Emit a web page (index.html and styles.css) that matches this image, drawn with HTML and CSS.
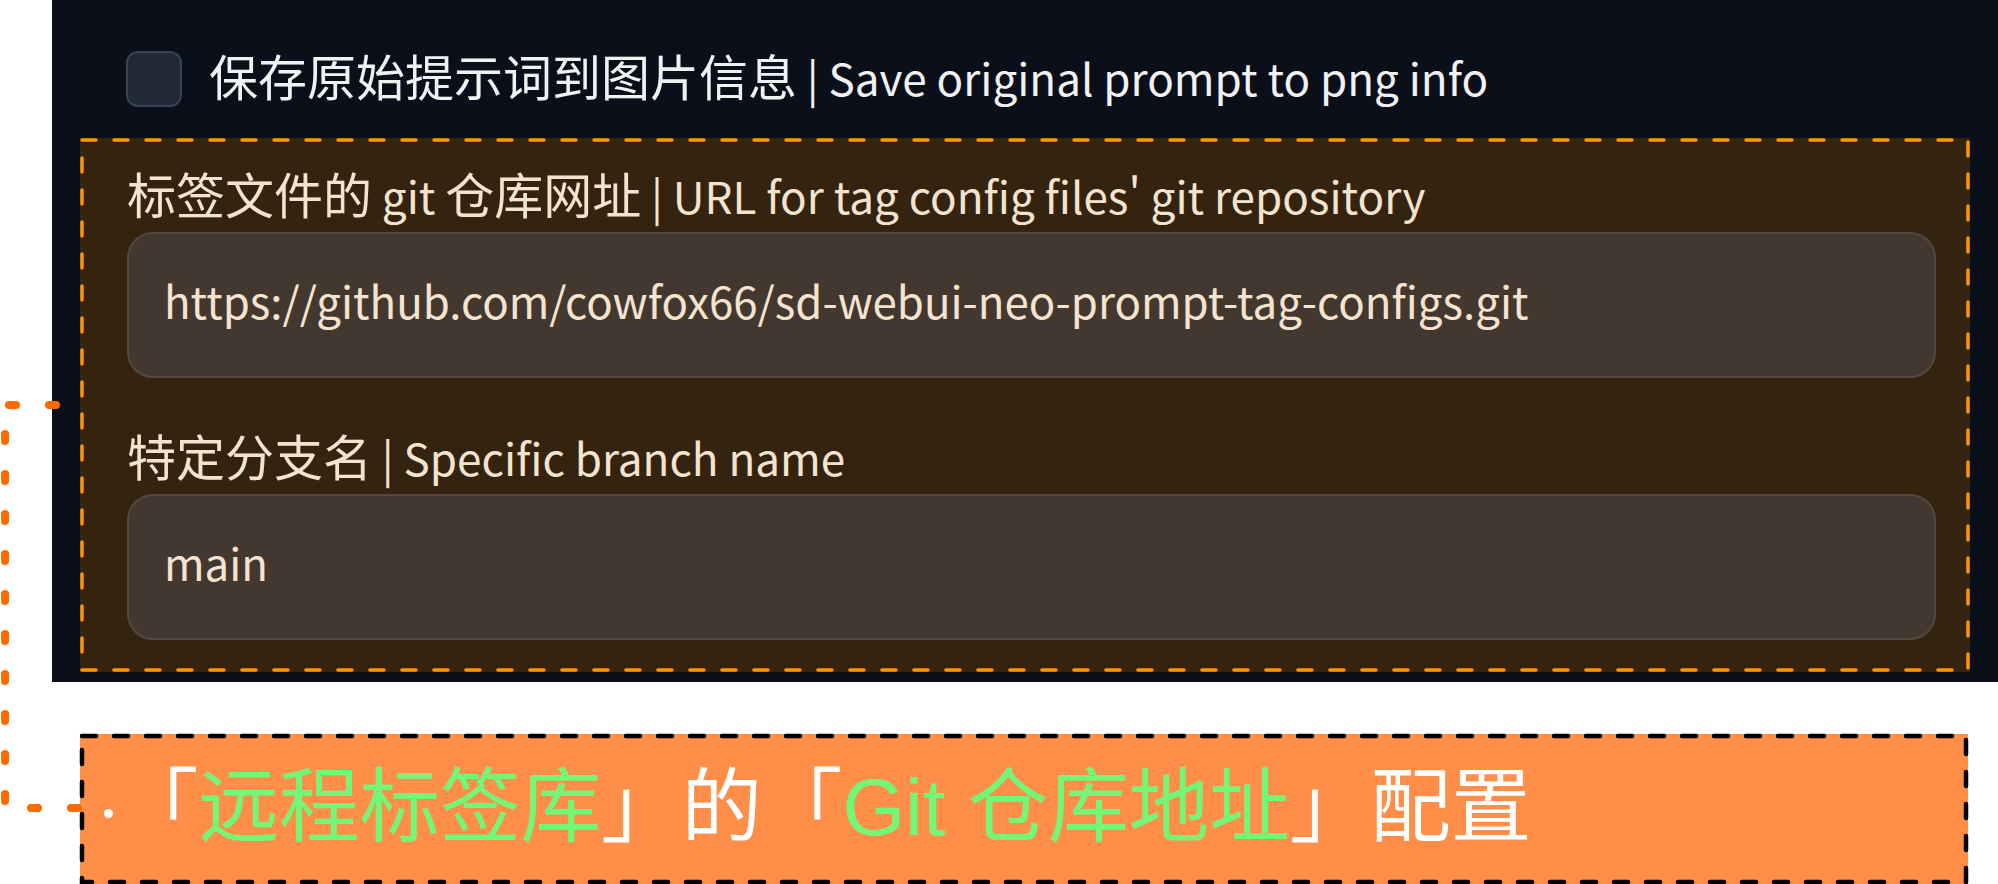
FILE: index.html
```html
<!DOCTYPE html>
<html lang="zh-CN">
<head>
<meta charset="utf-8">
<title>Neo Prompt Tag Settings</title>
<link rel="stylesheet" href="styles.css">
</head>
<body>
<div class="stage">
  <section class="panel">
    <label class="check-row">
      <input type="checkbox" class="checkbox">
      <span class="check-label">保存原始提示词到图片信息<span class="latin"> | Save original prompt to png info</span></span>
    </label>
    <div class="group">
      <svg class="dash-frame" aria-hidden="true"><rect class="dash-rect dash-orange"></rect></svg>
      <label class="field">
        <span class="field-label">标签文件的<span class="latin"> git </span>仓库网址<span class="latin"> | URL for tag config files' git repository</span></span>
        <input class="field-input" type="text" value="https://github.com/cowfox66/sd-webui-neo-prompt-tag-configs.git">
      </label>
      <label class="field field-second">
        <span class="field-label">特定分支名<span class="latin"> | Specific branch name</span></span>
        <input class="field-input" type="text" value="main">
      </label>
    </div>
  </section>
  <div class="callout">
    <svg class="dash-frame" aria-hidden="true"><rect class="dash-rect dash-black"></rect></svg>
    <span class="bullet"></span>
    <p class="callout-text">「<span class="hl">远程标签库</span>」的「<span class="hl">Git 仓库地址</span>」配置</p>
  </div>
  <svg class="connector" width="100" height="884" aria-hidden="true">
    <path d="M56 405 H5 V808 H84"></path>
  </svg>
</div>
</body>
</html>
```

FILE: styles.css
```css
* { box-sizing: border-box; }

html, body {
  margin: 0;
  padding: 0;
  background: #ffffff;
}

body {
  width: 1998px;
  height: 884px;
  overflow: hidden;
  font-family: "Noto Sans CJK SC", "Noto Sans", sans-serif;
}

.stage {
  position: relative;
  width: 1998px;
  height: 884px;
}

.panel {
  margin-left: 52px;
  width: 1946px;
  background: #0b0f19;
  padding: 51px 28px 10px 28px;
}

.check-row {
  display: flex;
  align-items: center;
  height: 56px;
  margin-left: 46px;
  gap: 27px;
}

.checkbox {
  appearance: none;
  -webkit-appearance: none;
  margin: 0;
  width: 56px;
  height: 56px;
  border: 2px solid #394253;
  border-radius: 12px;
  background: #1f2937;
  flex: none;
}

.check-label {
  font-size: 49px;
  line-height: 48px;
  padding-bottom: 8px;
  color: #f0f1f3;
  white-space: nowrap;
}

.latin {
  font-size: 44px;
  line-height: 1;
}

.group {
  position: relative;
  margin-top: 31px;
  background: #33230f;
  padding: 19px 34px 32px 47px;
}

.dash-frame {
  position: absolute;
  left: 0;
  top: 0;
  width: 100%;
  height: 100%;
  overflow: visible;
  pointer-events: none;
}

.dash-rect {
  x: 2px;
  y: 2px;
  width: calc(100% - 4px);
  height: calc(100% - 4px);
  fill: none;
  stroke-dasharray: 14 18;
  stroke-linecap: round;
}

.dash-orange {
  stroke: #ff9500;
  stroke-width: 3.5;
}

.dash-black {
  stroke: #000000;
  stroke-width: 4.5;
}

.field {
  display: block;
}

.field-second {
  margin-top: 41px;
}

.field-label {
  display: block;
  font-size: 49px;
  line-height: 72px;
  color: #f4e4cf;
  white-space: nowrap;
}

.field-input {
  display: block;
  margin-top: 3px;
  width: 100%;
  height: 146px;
  border: 2px solid #54483e;
  border-radius: 26px;
  background: #433830;
  padding: 0 35px 11px 35px;
  font-family: "Noto Sans CJK SC", "Noto Sans", sans-serif;
  font-size: 43.8px;
  color: #f4e4cf;
  outline: none;
}

.callout {
  position: relative;
  margin: 52px 0 0 80px;
  width: 1888px;
  height: 150px;
  background: #ff8f48;
  display: flex;
  align-items: center;
  padding-left: 24px;
  padding-bottom: 4px;
}

.bullet {
  width: 9px;
  height: 9px;
  border-radius: 50%;
  background: #ffffff;
  flex: none;
  margin-top: 12px;
}

.callout-text {
  margin: 0 0 0 5px;
  font-family: "Liberation Sans", "Noto Sans CJK SC", sans-serif;
  font-size: 80.5px;
  line-height: 80px;
  color: #ffffff;
  white-space: nowrap;
}

.hl {
  color: #72f876;
}

.connector {
  position: absolute;
  left: 0;
  top: 0;
  overflow: visible;
}

.connector path {
  fill: none;
  stroke: #ff6a00;
  stroke-width: 8;
  stroke-linecap: round;
  stroke-dasharray: 7 33;
}
```
